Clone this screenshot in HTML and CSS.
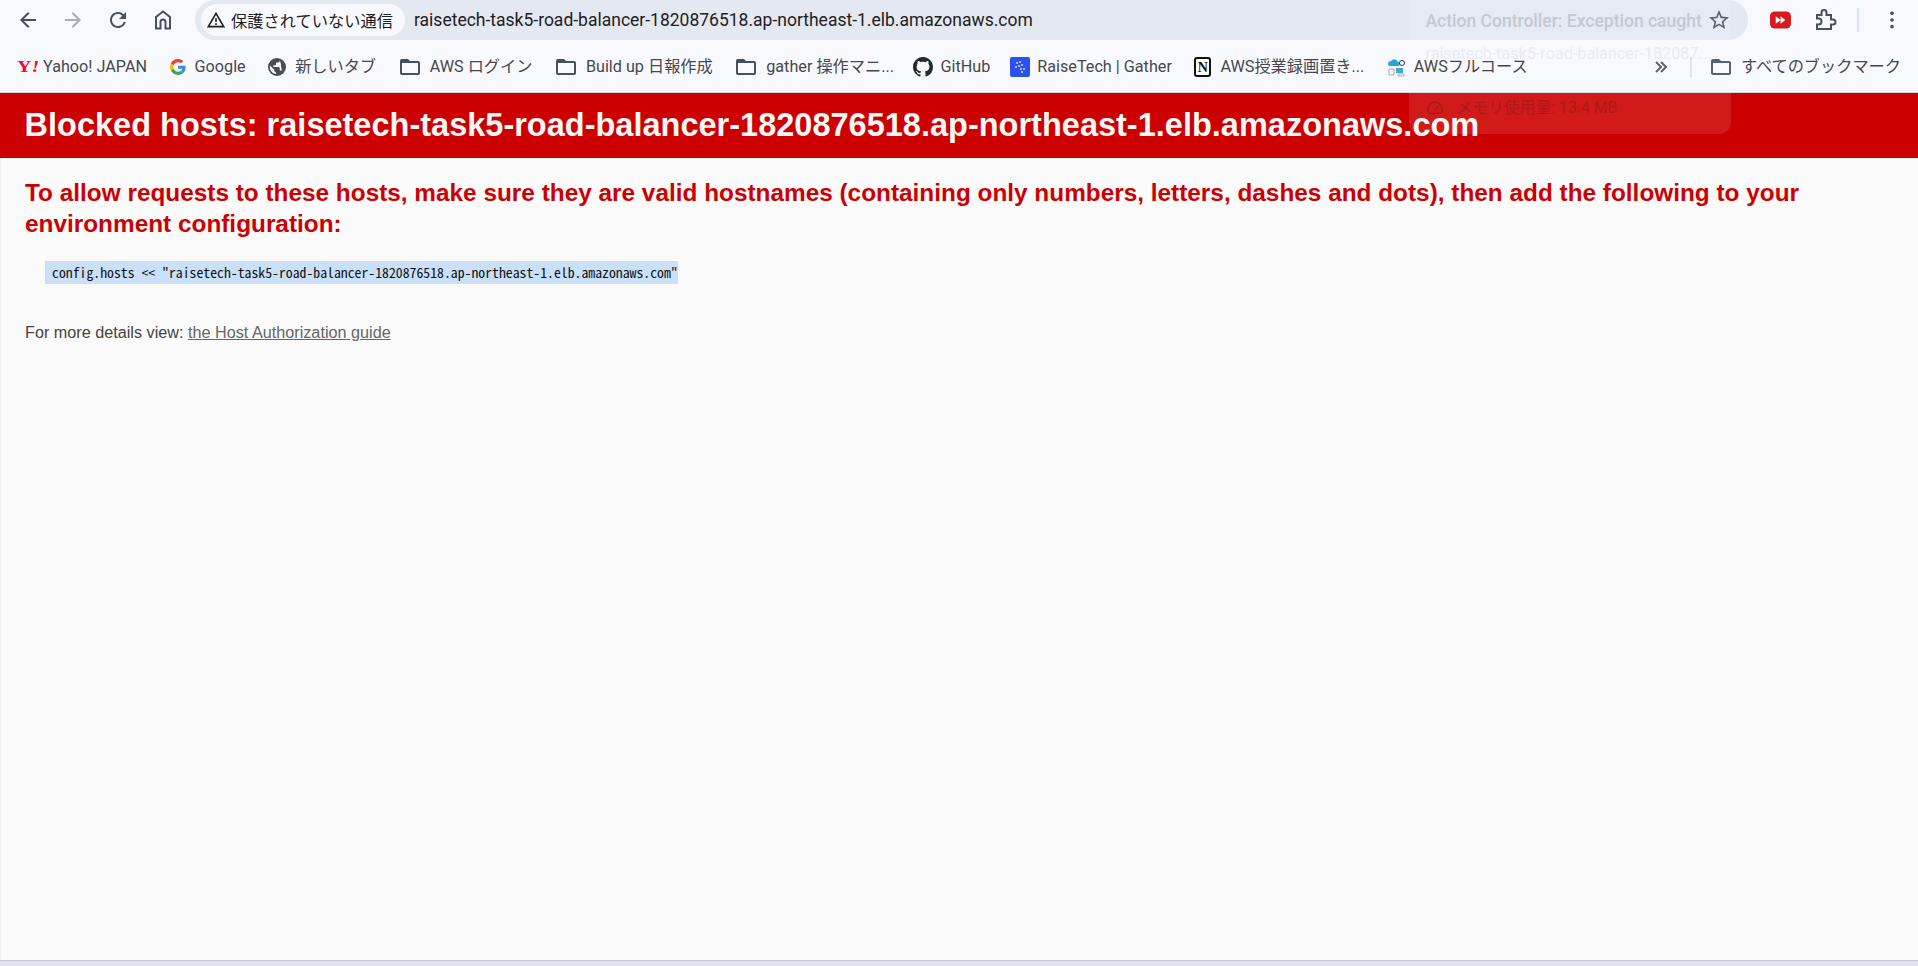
FILE: index.html
```html
<!DOCTYPE html>
<html lang="en">
<head>
    <meta charset="UTF-8">
    <title>Action Controller: Exception caught</title>
    <link rel="stylesheet" href="styles.css">
</head>
<body>
    <div class="toolbar">
        <button class="nav-btn"><svg viewBox="0 0 24 24"><path d="M20 11H7.83l5.59-5.59L12 4l-8 8 8 8 1.41-1.41L7.83 13H20v-2z"/></svg></button>
        <button class="nav-btn disabled"><svg viewBox="0 0 24 24"><path d="M12 4l-1.41 1.41L16.17 11H4v2h12.17l-5.58 5.59L12 20l8-8z"/></svg></button>
        <button class="nav-btn"><svg viewBox="0 0 24 24"><path d="M17.65 6.35A7.958 7.958 0 0 0 12 4c-4.42 0-7.99 3.58-7.99 8s3.57 8 7.99 8c3.73 0 6.84-2.55 7.73-6h-2.08A5.99 5.99 0 0 1 12 18c-3.31 0-6-2.69-6-6s2.69-6 6-6c1.66 0 3.14.69 4.22 1.78L13 11h7V4l-2.35 2.35z"/></svg></button>
        <button class="nav-btn"><svg viewBox="0 0 24 24"><path class="outline" d="M12 3.5 5 9v11.5h4.5V14a2.5 2.5 0 0 1 5 0v6.5H19V9z"/></svg></button>
        <div class="omnibox">
            <div class="chip">
                <svg viewBox="0 0 24 24"><path d="M12 5.99 19.53 19H4.47L12 5.99M12 2 1 21h22L12 2zm1 14h-2v2h2v-2zm0-6h-2v4h2v-4z"/></svg>
                <span>保護されていない通信</span>
            </div>
            <span class="url">raisetech-task5-road-balancer-1820876518.ap-northeast-1.elb.amazonaws.com</span>
            <svg class="star" viewBox="0 0 24 24"><path d="M22 9.24l-7.19-.62L12 2 9.19 8.63 2 9.24l5.46 4.73L5.82 21 12 17.27 18.18 21l-1.63-7.03L22 9.24zM12 15.4l-3.76 2.27 1-4.28-3.32-2.88 4.38-.38L12 6.1l1.71 4.04 4.38.38-3.32 2.88 1 4.28L12 15.4z"/></svg>
        </div>
        <div class="toolbar-right">
            <svg class="yt-icon" viewBox="0 0 22 18"><rect width="22" height="18" rx="5" fill="#d71920"/><path d="M6 5l5 4-5 4zM11 5l5 4-5 4z" fill="#fff"/></svg>
            <svg class="puzzle" viewBox="0 0 24 24"><path d="M20 11.5h-2V7H13.500V4.500a2.500 2.500 0 0 0-5 0V7H4v3.500h1.500a3 3 0 0 1 0 6H4V21h14v-4.500h2a2.500 2.500 0 0 0 0-5z"/></svg>
            <span class="divider"></span>
            <svg class="dots" viewBox="0 0 6 24"><circle cx="3" cy="4" r="2.200"/><circle cx="3" cy="12" r="2.200"/><circle cx="3" cy="20" r="2.200"/></svg>
        </div>
    </div>

    <div class="bookmarks">
        <a class="bm yahoo-item"><span class="yahoo">Y<i>!</i></span><span>Yahoo! JAPAN</span></a>
        <a class="bm"><svg class="bm-icon google" viewBox="0 0 48 48"><path fill="#EA4335" d="M24 9.500c3.540 0 6.710 1.220 9.210 3.600l6.850-6.850C35.900 2.380 30.470 0 24 0 14.620 0 6.510 5.380 2.560 13.220l7.980 6.190C12.430 13.720 17.740 9.500 24 9.500z"/><path fill="#4285F4" d="M46.980 24.550c0-1.570-.15-3.090-.38-4.550H24v9.020h12.940c-.58 2.960-2.260 5.480-4.780 7.180l7.730 6c4.510-4.180 7.090-10.360 7.090-17.650z"/><path fill="#FBBC05" d="M10.530 28.590c-.48-1.450-.76-2.990-.76-4.590s.27-3.140.76-4.590l-7.980-6.190C.92 16.460 0 20.120 0 24c0 3.880.92 7.540 2.560 10.780l7.970-6.190z"/><path fill="#34A853" d="M24 48c6.480 0 11.930-2.130 15.890-5.810l-7.730-6c-2.150 1.450-4.920 2.300-8.160 2.300-6.260 0-11.570-4.220-13.470-9.910l-7.980 6.190C6.510 42.620 14.620 48 24 48z"/></svg><span>Google</span></a>
        <a class="bm"><svg class="bm-icon globe" viewBox="2 2 20 20"><circle cx="12" cy="12" r="10" fill="#474b52"/><path fill="#f8f9fe" d="M11 19.900c-3.900-.5-7-3.800-7-7.900 0-.6.100-1.200.2-1.800L9 15v1c0 1.100.9 2 2 2zM15 4.600V5c0 1.100-.9 2-2 2h-2v2c0 .6-.4 1-1 1H8v2h6c.6 0 1 .4 1 1v3h1c.9 0 1.600.6 1.900 1.400-1.400-3-.9-9-2.900-12.800z"/></svg><span>新しいタブ</span></a>
        <a class="bm"><svg class="bm-icon folder" viewBox="0 0 24 24"><path d="M20 6h-8l-2-2H4c-1.100 0-1.990.9-1.990 2L2 18c0 1.100.9 2 2 2h16c1.100 0 2-.9 2-2V8c0-1.100-.9-2-2-2zm0 12H4V8h16v10z"/></svg><span>AWS ログイン</span></a>
        <a class="bm"><svg class="bm-icon folder" viewBox="0 0 24 24"><path d="M20 6h-8l-2-2H4c-1.100 0-1.990.9-1.990 2L2 18c0 1.100.9 2 2 2h16c1.100 0 2-.9 2-2V8c0-1.100-.9-2-2-2zm0 12H4V8h16v10z"/></svg><span>Build up 日報作成</span></a>
        <a class="bm"><svg class="bm-icon folder" viewBox="0 0 24 24"><path d="M20 6h-8l-2-2H4c-1.100 0-1.990.9-1.990 2L2 18c0 1.100.9 2 2 2h16c1.100 0 2-.9 2-2V8c0-1.100-.9-2-2-2zm0 12H4V8h16v10z"/></svg><span>gather 操作マニ...</span></a>
        <a class="bm github-item"><svg class="bm-icon" viewBox="0 0 16 16"><path fill="#24292f" d="M8 0C3.580 0 0 3.580 0 8c0 3.540 2.290 6.530 5.470 7.590.4.070.55-.17.55-.38 0-.19-.01-.82-.01-1.490-2.010.37-2.530-.49-2.690-.94-.09-.23-.48-.94-.82-1.130-.28-.15-.68-.52-.01-.53.63-.01 1.080.58 1.230.82.72 1.210 1.870.87 2.330.66.07-.52.28-.87.51-1.070-1.780-.2-3.640-.89-3.640-3.950 0-.87.31-1.590.82-2.150-.08-.2-.36-1.020.08-2.120 0 0 .67-.21 2.200.82.64-.18 1.320-.27 2-.27.68 0 1.360.09 2 .27 1.530-1.040 2.200-.82 2.200-.82.44 1.100.16 1.920.08 2.120.51.56.82 1.270.82 2.150 0 3.070-1.870 3.750-3.650 3.950.29.25.54.73.54 1.480 0 1.070-.01 1.930-.01 2.200 0 .21.15.46.55.38A8.013 8.013 0 0 0 16 8c0-4.420-3.580-8-8-8z"/></svg><span>GitHub</span></a>
        <a class="bm"><svg class="bm-icon" viewBox="0 0 20 20"><rect width="20" height="20" rx="2" fill="#2b50f0"/><g fill="#c9d4ff"><circle cx="7" cy="6" r="1.100"/><circle cx="10" cy="5" r="1.100"/><circle cx="9" cy="9" r="1.100"/><circle cx="12" cy="8" r="1.100"/><circle cx="6" cy="10" r="1.100"/><circle cx="11" cy="12" r="1.100"/><circle cx="14" cy="12" r="1.100"/><circle cx="12" cy="15" r="1.100"/></g></svg><span>RaiseTech | Gather</span></a>
        <a class="bm"><span class="notion">N</span><span>AWS授業録画置き...</span></a>
        <a class="bm"><svg class="bm-icon" viewBox="0 0 20 20"><path fill="#2aa5d8" d="M1 7a3 3 0 0 1 3-3 4 4 0 0 1 7 1 2 2 0 0 1 0 4H3a2 2 0 0 1-2-2z"/><circle cx="15" cy="6" r="2.500" fill="#fff" stroke="#333"/><rect x="9" y="11" width="7" height="5" fill="#3fa9d6"/><path d="M2 12h5v6H2zM11 17h6v2h-6z" fill="none" stroke="#99a" stroke-width=".8"/></svg><span class="dark">AWSフルコース</span></a>
        <svg class="chevrons" viewBox="0 0 14 14"><path d="M2 2l5 5-5 5M7 2l5 5-5 5"/></svg>
        <span class="bm-divider"></span>
        <a class="bm"><svg class="bm-icon folder" viewBox="0 0 24 24"><path d="M20 6h-8l-2-2H4c-1.100 0-1.990.9-1.990 2L2 18c0 1.100.9 2 2 2h16c1.100 0 2-.9 2-2V8c0-1.100-.9-2-2-2zm0 12H4V8h16v10z"/></svg><span>すべてのブックマーク</span></a>
    </div>

    <header class="error-header">
        <h1>Blocked hosts: raisetech-task5-road-balancer-1820876518.ap-northeast-1.elb.amazonaws.com</h1>
    </header>

    <main class="page">
        <h2>To allow requests to these hosts, make sure they are valid hostnames (containing only numbers, letters, dashes and dots), then add the following to your environment configuration:</h2>
        <pre class="code">config.hosts &lt;&lt; "raisetech-task5-road-balancer-1820876518.ap-northeast-1.elb.amazonaws.com"</pre>
        <p class="more">For more details view: <a href="#">the Host Authorization guide</a></p>
    </main>
    <div class="bottom-bar"></div>

    <!-- hover card of the tab, fading out over the page -->
    <div class="tab-card">
        <div class="card-title">Action Controller: Exception caught</div>
        <div class="card-url">raisetech-task5-road-balancer-182087...</div>
        <div class="card-memory">
            <svg viewBox="0 0 24 24"><path d="M4 19a9.500 9.500 0 1 1 16 0zM12 15l4-6"/></svg>
            <span>メモリ使用量: 13.4 MB</span>
        </div>
    </div>
</body>
</html>
```

FILE: styles.css
```css
* { box-sizing: border-box; }

html, body { height: 100%; }

body {
    margin: 0;
    height: 966px;
    overflow: hidden;
    display: flex;
    flex-direction: column;
    background-color: #fafafa;
    font-family: Roboto, "Noto Sans CJK JP", sans-serif;
}

/* top toolbar */
.toolbar {
    display: flex;
    align-items: flex-start;
    height: 40px;
    flex-shrink: 0;
    padding-left: 5px;
    background-color: #f8f9fe;
}

.nav-btn {
    width: 45px;
    height: 40px;
    padding: 0;
    border: none;
    background: none;
    display: flex;
    align-items: center;
    justify-content: center;
}

.nav-btn svg { width: 24px; height: 24px; fill: #474f60; }
.nav-btn.disabled svg { fill: #a9acb3; }
.nav-btn .outline { fill: none; stroke: #474f60; stroke-width: 2; }

.omnibox {
    flex: 1;
    height: 40px;
    margin-left: 10px;
    padding-left: 6px;
    padding-right: 17px;
    display: flex;
    align-items: center;
    background-color: #e4e8f1;
    border-radius: 20px;
}

.chip {
    width: 204px;
    height: 32px;
    display: flex;
    align-items: center;
    padding-left: 5px;
    gap: 5px;
    background-color: #f8f9fe;
    border-radius: 16px;
    font-size: 16.250px;
    color: #1f2024;
}

.chip svg { width: 20px; height: 20px; fill: #1f2024; }

.url {
    margin-left: 9px;
    flex: 1;
    font-size: 17.500px;
    color: #1f2024;
}

.star { width: 24px; height: 24px; fill: #474f60; }

.toolbar-right {
    width: 170px;
    height: 40px;
    display: flex;
    align-items: center;
    padding-left: 22px;
}

.yt-icon { width: 21px; height: 18px; }
.puzzle { width: 24px; height: 24px; margin-left: 22px; fill: none; stroke: #474f60; stroke-width: 2; }
.divider { width: 2px; height: 24px; margin-left: 20px; background-color: #d3e3fd; }
.dots { width: 6px; height: 20px; margin-left: 30px; fill: #474f60; }

/* bookmarks bar */
.bookmarks {
    display: flex;
    align-items: center;
    gap: 22.500px;
    height: 53px;
    flex-shrink: 0;
    padding: 2px 17px 0;
    background-color: #f8f9fe;
    border-bottom: 1px solid #d5d8e0;
}

.bm {
    display: flex;
    align-items: center;
    gap: 7px;
    font-size: 16.200px;
    line-height: 20px;
    color: #46484d;
    white-space: nowrap;
}

.bm .dark { color: #2f3034; }

.yahoo-item { gap: 6px; }
.github-item { margin-left: -3px; margin-right: -2.500px; }

.bm-icon { width: 20px; height: 20px; fill: #474f60; flex-shrink: 0; }
.bm-icon.google { width: 16px; height: 16px; margin-right: 2px; }
.bm-icon.globe { width: 18px; height: 18px; margin-right: 2px; }
.bm-icon.folder { width: 24px; height: 24px; margin-left: -1px; margin-right: 1px; }

.yahoo {
    width: 20px;
    font-family: "Liberation Serif", serif;
    font-weight: bold;
    font-size: 16px;
    line-height: 1;
    color: #ff0033;
    white-space: nowrap;
    transform: scaleX(1.250);
    transform-origin: left center;
}

.notion {
    width: 17px;
    height: 20px;
    margin-right: 2px;
    text-align: center;
    font-family: "Liberation Serif", serif;
    font-weight: bold;
    font-size: 14px;
    line-height: 17px;
    color: #111;
    background-color: #fff;
    border: 2px solid #111;
    border-radius: 3px;
}

.chevrons {
    width: 14px;
    height: 14px;
    margin-left: auto;
    margin-right: -1px;
    fill: none;
    stroke: #474f60;
    stroke-width: 2;
}

.bm-divider { width: 2px; height: 20px; margin-right: -4.500px; background-color: #d3e3fd; }

/* error page */
.error-header {
    height: 65px;
    flex-shrink: 0;
    padding: 0 24.500px 0;
    display: flex;
    align-items: center;
    background-color: #c00;
}

h1 {
    margin: 0;
    font-family: "Liberation Sans", Arial, sans-serif;
    font-size: 32.530px;
    font-weight: bold;
    color: #f7f7f7;
    white-space: nowrap;
}

.page {
    flex: 1;
    padding: 19px 24px 0;
    font-family: "Liberation Sans", Arial, sans-serif;
    border-left: 1px solid #f0f0f0;
}

h2 {
    margin: 0;
    font-size: 24.360px;
    line-height: 31px;
    font-weight: bold;
    color: #c00;
}

.code {
    width: fit-content;
    margin: 22px 0 0 20px;
    padding: 0 0 0 7px;
    height: 23px;
    line-height: 23px;
    font-family: "Noto Sans Mono CJK JP", "Liberation Mono", monospace;
    font-size: 13.750px;
    color: #111;
    background-color: #c9e0f8;
}

.more {
    margin: 39px 0 0;
    font-size: 16.220px;
    color: #444;
}

.more a { color: #666; }

.bottom-bar {
    height: 6px;
    flex-shrink: 0;
    background-color: #e0e3ee;
    border-top: 1px solid #c5c5d5;
}

/* hover card */
.tab-card {
    position: absolute;
    top: 0;
    left: 1409px;
    width: 322px;
    height: 134px;
    padding: 0 17px 0 16.500px;
    border-radius: 0 0 12px 12px;
    background-color: rgba(255, 255, 255, 0.1);
    overflow: hidden;
    white-space: nowrap;
}

.card-title {
    margin-top: 9px;
    font-size: 17.500px;
    font-weight: 500;
    line-height: 24px;
    color: #c3c8d4;
}

.card-url {
    margin-top: 10px;
    font-size: 16.200px;
    line-height: 22px;
    color: #e9ecf4;
}

.card-memory {
    margin-top: 32px;
    display: flex;
    align-items: center;
    gap: 13px;
    font-size: 15.800px;
    line-height: 22px;
    color: #b01818;
}

.card-memory svg { width: 18px; height: 18px; flex-shrink: 0; fill: none; stroke: #b01818; stroke-width: 2; }
```
